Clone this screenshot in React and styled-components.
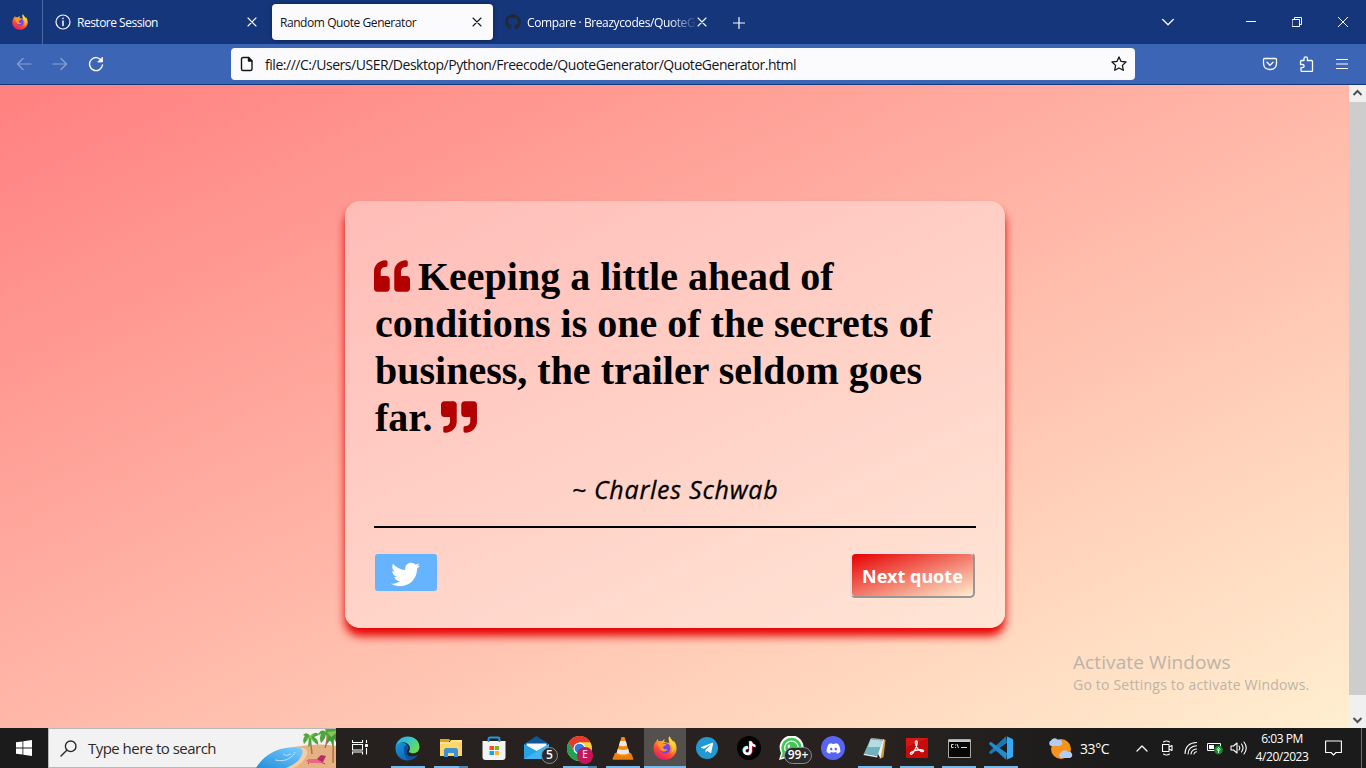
import React from "react";
import styled, { createGlobalStyle } from "styled-components";
import { FaQuoteLeft, FaQuoteRight, FaTwitter, FaGithub, FaDiscord, FaTelegramPlane, FaWhatsapp, FaTiktok } from "react-icons/fa";

const ui = `"Segoe UI", "Open Sans", "Noto Sans", sans-serif`;

const GlobalStyle = createGlobalStyle`
  * { box-sizing: border-box; }
  body { margin: 0; overflow: hidden; font-family: ${ui}; }
  svg { display: block; flex: none; }
`;

const Screen = styled.div`
  width: 1366px;
  height: 768px;
  display: flex;
  flex-direction: column;
  overflow: hidden;
`;

/* ---------- browser chrome ---------- */
const TabStrip = styled.header`
  height: 44px;
  flex: none;
  display: flex;
  align-items: center;
  background: #15367b;
  color: #fbfbfe;
`;

const PinnedTab = styled.div`
  width: 43px;
  height: 44px;
  display: flex;
  align-items: center;
  padding-left: 12px;
  border-right: 1px solid #4d68a0;
`;

const Tab = styled.div`
  width: ${(p) => p.$width}px;
  height: 36px;
  margin-left: ${(p) => p.$gap || 0}px;
  padding: 0 ${(p) => p.$end}px 0 ${(p) => p.$start}px;
  display: flex;
  align-items: center;
  border-radius: 4px;
  background: ${(p) => (p.$active ? "#fbfbfe" : "transparent")};
  color: ${(p) => (p.$active ? "#15141a" : "#fbfbfe")};
  box-shadow: ${(p) => (p.$active ? "0 0 4px rgba(0,0,0,.4)" : "none")};
`;

const TabTitle = styled.span`
  flex: 1;
  min-width: 0;
  margin-left: ${(p) => p.$gap || 0}px;
  padding-top: 2px;
  font-size: 12px;
  line-height: 18px;
  letter-spacing: ${(p) => p.$spacing || 0}px;
  white-space: nowrap;
  mask-image: ${(p) => (p.$fade ? "linear-gradient(to right, #000 84%, transparent)" : "none")};
`;

const NewTab = styled.div`
  margin-left: 21px;
  padding-top: 1px;
`;

const WindowControls = styled.div`
  margin-left: auto;
  padding-right: 18px;
  display: flex;
  align-items: center;
`;

const Spacer = styled.div`
  width: ${(p) => p.$w}px;
  flex: none;
`;

const Toolbar = styled.div`
  height: 41px;
  flex: none;
  display: flex;
  align-items: center;
  background: #3d65b5;
  border-bottom: 1px solid #15367b;
  color: #fbfbfe;
`;

const NavButtons = styled.div`
  width: 231px;
  padding-left: 16px;
  display: flex;
  gap: 20px;
`;

const UrlBar = styled.div`
  width: 904px;
  height: 32px;
  padding: 0 8px;
  display: flex;
  align-items: center;
  background: #fbfbfe;
  color: #15141a;
  border-radius: 4px;
`;

const UrlText = styled.span`
  flex: 1;
  margin-left: 10px;
  padding-top: 2px;
  font-size: 14px;
  line-height: 20px;
  letter-spacing: -0.465px;
  white-space: nowrap;
`;

const ToolbarActions = styled.div`
  margin-left: auto;
  padding-right: 16px;
  display: flex;
  gap: 20px;
`;

/* ---------- page ---------- */
const Viewport = styled.div`
  height: 643px;
  flex: none;
  display: flex;
  position: relative;
`;

const Page = styled.main`
  flex: 1;
  display: flex;
  justify-content: center;
  padding-top: 116px;
  background: linear-gradient(to bottom right, #ff8080, #ffefd0);
`;

const QuoteBox = styled.section`
  width: 660px;
  height: 427px;
  padding: 52px 30px 0;
  margin-left: 1px;
  border-radius: 15px;
  background: rgba(255, 255, 255, 0.35);
  position: relative;
  &::before {
    content: "";
    position: absolute;
    inset: 0;
    border-radius: 15px;
    box-shadow: 0 8px 10px #e60000;
    clip-path: path(evenodd, "M-30 -30H690V470H-30Z M15 0H645A15 15 0 0 1 660 15V412A15 15 0 0 1 645 427H15A15 15 0 0 1 0 412V15A15 15 0 0 1 15 0Z");
  }
`;

const Quote = styled.h1`
  margin: 0;
  font: bold 40px/47px "Times New Roman", "Liberation Serif", serif;
  color: #000;
  svg {
    display: inline-block;
    margin: 0 -2px 0 -1px;
    vertical-align: -4px;
    color: #b30000;
  }
`;

const Author = styled.p`
  margin: 29px 0 0;
  height: 56px;
  text-align: center;
  font: italic 500 25px/38px "Comic Sans MS", "Open Sans", sans-serif;
  letter-spacing: 0.75px;
  color: #000;
  -webkit-text-stroke: 0.3px #000;
`;

const Rule = styled.hr`
  margin: 0 -1px;
  border: 0;
  height: 2px;
  background: #000;
`;

const Actions = styled.div`
  display: flex;
  justify-content: space-between;
  padding-top: 24px;
`;

const TweetButton = styled.button`
  width: 62px;
  height: 37px;
  margin-top: 2px;
  padding: 3px 1px 0 0;
  display: flex;
  align-items: center;
  justify-content: center;
  border: 0;
  border-radius: 3px;
  background: #66b3ff;
  color: #fff;
`;

const NextButton = styled.button`
  width: 125px;
  height: 46px;
  padding: 2px 0 0;
  border: 2px solid;
  border-color: #e3e3e3 #979797 #979797 #e8dcd8;
  border-radius: 5px;
  background: linear-gradient(to bottom right, #e60000, #ffefd0) padding-box;
  color: #fff;
  font: bold 18px/24px "Noto Sans", "Open Sans", sans-serif;
  white-space: nowrap;
`;

const Watermark = styled.div`
  position: absolute;
  left: 1073px;
  top: 564px;
  color: #bcb3a9;
  white-space: nowrap;
`;

const WatermarkTitle = styled.div`
  font-size: 19px;
  line-height: 26px;
  letter-spacing: 0.1px;
`;

const WatermarkText = styled.div`
  font-size: 14px;
  line-height: 20px;
  letter-spacing: 0.2px;
`;

const Scrollbar = styled.div`
  width: 17px;
  display: flex;
  flex-direction: column;
  align-items: center;
  background: #f0f0f0;
`;

const ScrollThumb = styled.div`
  width: 17px;
  height: 593px;
  flex: none;
  margin-bottom: 16px;
  background: #cdcdcd;
`;

/* ---------- taskbar ---------- */
const Taskbar = styled.footer`
  height: 40px;
  flex: none;
  display: flex;
  background: linear-gradient(to right, #1b1b1b, #27221f 30%, #27221f 65%, #1b1b1b 82%);
  color: #fff;
`;

const StartButton = styled.div`
  width: 48px;
  display: flex;
  align-items: center;
  justify-content: center;
`;

const SearchBox = styled.div`
  width: 288px;
  height: 40px;
  padding-left: 11px;
  display: flex;
  align-items: center;
  background: #f2f2f2;
  border: 1px solid #b8b8b8;
  border-right: 0;
  color: #2b2b2b;
  font-size: 15px;
  letter-spacing: -0.53px;
  white-space: nowrap;
`;

const SearchLabel = styled.span`
  width: 168px;
  margin-left: 11px;
`;

const TaskView = styled.div`
  width: 50px;
  padding: 11px 0 0 16px;
`;

const AppSlot = styled.div`
  width: ${(p) => p.$width}px;
  height: 40px;
  display: flex;
  align-items: center;
  justify-content: center;
  position: relative;
  background: ${(p) => (p.$focused ? "#53504e" : "transparent")};
  &::after {
    content: "";
    display: ${(p) => (p.$running ? "block" : "none")};
    position: absolute;
    bottom: 0;
    left: ${(p) => (p.$focused ? 0 : p.$width === 43 ? 5 : 4)}px;
    right: ${(p) => (p.$focused ? 0 : 4)}px;
    height: 2px;
    background: ${(p) => (p.$stacked ? "linear-gradient(to right, #76b9ed 75%, #5486ad 75%)" : "#76b9ed")};
  }
`;

const AppDisc = styled.div`
  width: ${(p) => p.$size}px;
  height: ${(p) => p.$size}px;
  border-radius: 50%;
  display: flex;
  align-items: center;
  justify-content: center;
  background: ${(p) => p.$color};
`;

const Badge = styled.span`
  position: absolute;
  left: ${(p) => p.$x}px;
  top: 19px;
  width: ${(p) => p.$w}px;
  height: 17px;
  border-radius: 9px;
  border: ${(p) => (p.$color ? "0" : "1px solid #8c8c8c")};
  background: ${(p) => p.$color || "#2c2b2b"};
  color: #fff;
  text-align: center;
  font-size: ${(p) => p.$font || 12}px;
  line-height: ${(p) => (p.$color ? 15 : 14)}px;
  font-weight: ${(p) => (p.$color ? 400 : 600)};
  z-index: 1;
`;

const Weather = styled.div`
  width: 108px;
  padding-left: 26px;
  display: flex;
  align-items: center;
  gap: 7px;
  font-size: 14px;
  letter-spacing: -0.4px;
`;

const Tray = styled.div`
  flex: 1;
  display: flex;
  align-items: center;
`;

const TrayIcon = styled.div`
  width: ${(p) => p.$w}px;
  display: flex;
  justify-content: center;
`;

const Clock = styled.div`
  width: 62px;
  text-align: center;
  font-size: 12px;
  line-height: 18px;
  letter-spacing: -0.45px;
  white-space: nowrap;
`;

const ShowDesktop = styled.div`
  width: 5px;
  height: 40px;
  margin-left: auto;
  border-left: 1px solid #6a6a6a;
`;

/* ---------- drawings ---------- */
const Line = ({ d, w = 16, h = 16, sw = 1.2, opacity = 1, children }) => (
  <svg width={w} height={h} viewBox={`0 0 ${w} ${h}`} fill="none" stroke="currentColor" strokeWidth={sw} strokeLinecap="round" strokeLinejoin="round" opacity={opacity}>
    {d && <path d={d} />}
    {children}
  </svg>
);

const Close = () => <Line w={10} h={10} sw={1.1} d="M1 1l8 8M9 1L1 9" />;

const Firefox = ({ size }) => (
  <svg width={size} height={size} viewBox="0 0 24 24">
    <defs>
      <linearGradient id={`ff${size}`} x1=".8" y1="0" x2=".25" y2="1">
        <stop offset="0" stopColor="#fff44f" />
        <stop offset=".35" stopColor="#ffab24" />
        <stop offset=".65" stopColor="#ff4b35" />
        <stop offset="1" stopColor="#e5146f" />
      </linearGradient>
    </defs>
    <path fill={`url(#ff${size})`} d="M3.5 5c.2-.8.8-1.7 1.2-2 .1 1 .6 1.8 1.2 2.2C7 5 8.4 5 9 5.2 10 3.9 11.2 3.5 12 3.5c-.8.9-.9 1.8-.6 2.5l5 1C15.8 4 14.8 2 16.4.2c.7 2.7 3 4 4 6 .2-.6 0-1.4-.2-1.9C22.5 6.3 23.6 9.500 23.600 12.500c0 6.300-5.200 11.300-11.600 11.300S.5 18.900.5 12.700C.5 9.500 1.600 6.800 3.500 5z" />
    <circle cx="12.200" cy="12.300" r="5.200" fill="#7542e5" />
    <path fill="#ff9729" d="M4.500 6.500C7 5.800 9 6.200 10 8h3.500c0 1.500-3.300 1.900-3.300 3-.2 2 1.900 3 4.300 1.900-1.400 3.800-7.200 3.200-8.100-1.400-.5 0-1.600-2.600-1.900-5z" />
    <path fill="#ffd53c" d="M17 7c3.500 3 3.200 7.500 1 10 3.500-1.500 4.500-6 2.400-10.800L16.400.2C15.800 3 16.500 5 17 7z" opacity=".8" />
  </svg>
);

const Edge = () => (
  <svg width="25" height="25" viewBox="0 0 24 24">
    <defs>
      <linearGradient id="edgeTop" x1="0" y1="0" x2="1" y2=".5"><stop stopColor="#22a5e8" /><stop offset=".5" stopColor="#35c4d2" /><stop offset="1" stopColor="#69dc55" /></linearGradient>
      <linearGradient id="edgeLow" x1="0" y1="0" x2="1" y2="1"><stop stopColor="#1798df" /><stop offset="1" stopColor="#0b55a5" /></linearGradient>
    </defs>
    <path fill="url(#edgeLow)" d="M.5 12C.5 7 5 5 8.500 6.500c3 1 4 3.500 4 5.500-2 2-2.500 7 2.500 7.600 3 .4 5-.6 6.500-1.600C19.500 21.500 16 23.500 12 23.500 5.500 23.500.5 18.500.5 12z" />
    <path fill="#0d4f9a" d="M8.500 12.500c0-2 1-3.500 3-4 .7.6 1.700 2 1.300 3.500-2 2-2.500 7 2.500 7.600 3 .4 5-.6 6.500-1.600-1.500 2.700-4.500 4.500-8 4.500-3 0-5.300-4-5.300-10z" />
    <path fill="url(#edgeTop)" d="M.5 11.500C1 5 6 .5 12 .5c7 0 11.500 4.500 11.500 10 0 4.500-3.500 6-6.500 6-2.500 0-4.200-1-3.300-2.200C15.800 10.500 12.500 6 8 6 4 6 1 8.500.5 11.500z" />
  </svg>
);

const Explorer = () => (
  <svg width="22" height="20" viewBox="0 0 22 20">
    <path fill="#e0a21b" d="M0 1h9l2 2h-2v3H0z" /><path fill="#ffd767" d="M0 4h10l1.500-2H22v16H0z" />
    <path fill="#ffe48f" d="M0 4h10l1.500-2H22v2H11l-1 2H0z" /><path fill="#3e92d3" d="M4 11.500L5.500 10h11l1.500 1.500V19h-4v-4H8v4H4z" />
  </svg>
);

const Store = () => (
  <svg width="24" height="24" viewBox="0 0 24 24">
    <path d="M6.500 8V3q0-1.500 1.500-1.500h8q1.500 0 1.500 1.500v5" fill="none" stroke="#2499df" strokeWidth="1.800" />
    <path fill="#f4f4f5" d="M.5 5h23v16q0 3-3 3h-17q-3 0-3-3z" /><path d="M6.500 4.500V6M17.500 4.500V6" stroke="#2499df" strokeWidth="1.800" />
    <path fill="#f15427" d="M7.500 10H12v4H7.500z" /><path fill="#7fba12" d="M12.800 10H17v4h-4.200z" /><path fill="#16a3eb" d="M7.500 15H12v4H7.500z" /><path fill="#fdb913" d="M12.800 15H17v4h-4.200z" />
  </svg>
);

const Mail = () => (
  <svg width="25" height="24" viewBox="0 0 25 24">
    <path fill="#0f5597" d="M0 8L12.500 0 25 8v5H0z" /><path fill="#f6f8fb" d="M2.500 7.500h20V17h-20z" />
    <path fill="#27a2e5" d="M0 8l12.500 7L25 8v15H0z" /><path fill="#57c1f4" d="M0 23l15-9L25 8v15z" opacity=".55" />
  </svg>
);

const Chrome = () => (
  <svg width="25" height="25" viewBox="0 0 24 24">
    <circle cx="12" cy="12" r="12" fill="#fdd13a" />
    <path fill="#e6392f" d="M1.600 6A12 12 0 0 1 22.400 6H12l-5.200 9z" /><path fill="#1fa255" d="M1.600 6A12 12 0 0 0 12 24l5.200-9H6.800z" />
    <circle cx="12" cy="12" r="5.800" fill="#fff" /><circle cx="12" cy="12" r="4.600" fill="#2d79e8" />
  </svg>
);

const Vlc = () => (
  <svg width="22" height="24" viewBox="0 0 22 24">
    <path fill="#ec7d0b" d="M3 17h16l2.500 6q0 .8-1 .8h-19q-1 0-1-.8z" /><path fill="#f58a13" d="M9.500 1h3L18 19q-7 3.500-14 0z" />
    <path fill="#e9e9e8" d="M8.200 5h5.600l1.300 4.500q-4 1.500-8.200 0zM5.800 13q5.200 2 10.400 0l1.200 4q-6.400 3-12.800 0z" />
  </svg>
);

const Notepad = () => (
  <svg width="24" height="24" viewBox="0 0 24 24">
    <path fill="#cf9b42" d="M20 3l2.500 1-2 17-4 2z" /><path fill="#eef3f1" d="M8 2l13 1.500-3.500 19L15 18z" />
    <path fill="#6fb3bd" d="M7.500 3l12 1.500L14.500 20 1 17.500z" /><path fill="#b5dcdf" d="M7.500 3l12 1.500-2 6.500L5 11z" />
    <path d="M7.500 2.500L20 4" stroke="#59666c" strokeDasharray="1 1" strokeWidth="1.500" /><path fill="#dce9e9" d="M1 17.500L14.500 20l-.5 1.500L.5 19z" />
  </svg>
);

const Acrobat = () => (
  <svg width="22" height="20" viewBox="0 0 22 20">
    <path fill="#c70b0b" d="M0 0h22v20H0z" /><path fill="#e52323" d="M0 0h22L0 9z" opacity=".5" />
    <path fill="none" stroke="#fff" strokeWidth="1.300" d="M4.500 16c-1-1.500 4-3.500 7-4s6.500-.3 6 1-4.500 0-6.500-3.500S9 3 10.300 3s1.200 3-.5 7-4.300 7.500-5.300 6z" />
  </svg>
);

const Terminal = () => (
  <svg width="23" height="19" viewBox="0 0 23 19">
    <path fill="#070707" stroke="#a8a8a8" d="M.5.500h22v18H.5z" /><path fill="#c5c9cc" d="M1 1h21v2H1z" />
    <path stroke="#ddd" fill="none" d="M5.500 5.500h-2v3h2M7.500 5.500v1M7.500 8v1M9 5l1.500 4M13 8.500h6" />
  </svg>
);

const VsCode = () => (
  <svg width="24" height="24" viewBox="0 0 24 24">
    <path fill="#1679ba" d="M.5 15.500L17 .3l1 6.500-15.500 11q-.7.400-1.300-.1l-.9-.8q-.6-.7.200-1.400z" />
    <path fill="#218bd0" d="M.5 8.500L17 23.700l1-6.500-15.500-11q-.7-.4-1.300.1l-.9.800q-.6.700.2 1.400z" />
    <path fill="#35a9f2" d="M17 0l6.200 2.800q.8.400.8 1.300v15.800q0 .9-.8 1.300L17 24q1 0 1-1V1q0-1-1-1z" />
  </svg>
);

const Beach = () => (
  <svg width="81" height="39" viewBox="0 0 81 39">
    <defs><linearGradient id="sea" x1="0" y1="1" x2="1" y2="0"><stop stopColor="#248fdb" /><stop offset="1" stopColor="#79ccff" /></linearGradient></defs>
    <path fill="#e6b183" d="M2 39Q18 20 46 17 66 14 81 17v22z" /><path fill="#f4cda2" d="M32 20q26-5 19 8-5 8-13 11H10z" />
    <path fill="url(#sea)" d="M1 39Q12 21 34 18.500q17-2 13 7Q44 34 31 39z" />
    <path d="M20 31q9 2 15-2 4-3 5-6M28 25q3 3 8 0" stroke="#b4e0ff" strokeWidth="1" fill="none" />
    <path d="M57 25q-1-8-2-17M78 34q1-15-1-30M70 19q3-8 2-16" stroke="#aa7343" strokeWidth="1.500" fill="none" />
    <path fill="#4da53b" d="M55 7q-3-5-7-1l2 1q-3 3-1 8l5-6-1 9q4-2 3-8 4 4 7 6 1-5-4-8 4-1 5-3-5-3-9 2zM71 3q-5-4-8 3l3-1q-2 4 0 9 4-3 5-9 2 7 6 8 1-4-1-7l5 3V0H70z" />
    <path fill="#459934" d="M76 6q-5 2-4 9l4-5q0 5 2 7l1-7 2 3V3z" />
    <path fill="#87c557" d="M55 7l6-4-5 5 4 5-5-4-6 2zM72 3l4 5 5-4v-2z" />
    <path fill="#f0668a" d="M51 32l3-2h10l4 2-1 2H54z" /><path fill="#b92a68" d="M62 30l4-4 5 1-3 6-3-1z" /><path d="M54 34l-1 1M66 33l4 2" stroke="#ba365b" />
  </svg>
);

const apps = [
  { icon: <Edge />, width: 43, running: true },
  { icon: <Explorer />, width: 43, running: true, stacked: true },
  { icon: <Store />, width: 43 },
  { icon: <Mail />, width: 43, badge: <Badge $x={26} $w={17}>5</Badge> },
  { icon: <Chrome />, width: 43, running: true, stacked: true, badge: <Badge $x={19} $w={16} $color="#c2185b" $font={10}>E</Badge> },
  { icon: <Vlc />, width: 43, running: true },
  { icon: <Firefox size={24} />, width: 41, running: true, focused: true },
  { icon: <AppDisc $size={22} $color="#2299d4"><FaTelegramPlane size={14} /></AppDisc>, width: 42 },
  {
    icon: (
      <AppDisc $size={24} $color="#000">
        <svg width="16" height="16" viewBox="0 0 16 16">
          <FaTiktok x="0.5" y="0.7" size={14} color="#25f4ee" /><FaTiktok x="1.8" y="1.700" size={14} color="#fe2c55" /><FaTiktok x="1.1" y="1.200" size={14} color="#fff" />
        </svg>
      </AppDisc>
    ),
    width: 42,
  },
  {
    icon: (
      <svg width="25" height="24" viewBox="0 0 25 24">
        <path fill="#fff" d="M0 24l2-7A12 12 0 1 1 7 22z" /><circle cx="12.500" cy="12" r="10.200" fill="#42c655" /><path fill="#42c655" d="M2 22l2-6 4 4z" />
        <FaWhatsapp x="4" y="3.500" size={17} color="#fff" />
      </svg>
    ),
    width: 42,
    badge: <Badge $x={14} $w={28}>99+</Badge>,
  },
  { icon: <AppDisc $size={24} $color="#5865f2"><FaDiscord size={15} /></AppDisc>, width: 42 },
  { icon: <Notepad />, width: 42, running: true },
  { icon: <Acrobat />, width: 42, running: true },
  { icon: <Terminal />, width: 42, running: true },
  { icon: <VsCode />, width: 42, running: true },
];

export default function App() {
  return (
    <Screen>
      <GlobalStyle />
      <TabStrip>
        <PinnedTab><Firefox size={16} /></PinnedTab>
        <Tab $width={225} $start={12} $end={11}>
          <Line sw={1.2}><circle cx="8" cy="8" r="7" /><path d="M8 7v4.500M8 4.300v.3" strokeWidth="1.500" /></Line>
          <TabTitle $gap={6} $spacing={-0.5}>Restore Session</TabTitle>
          <Close />
        </Tab>
        <Tab $width={221} $gap={4} $start={8} $end={11} $active>
          <TabTitle $spacing={-0.44}>Random Quote Generator</TabTitle>
          <Close />
        </Tab>
        <Tab $width={219} $start={12} $end={5}>
          <FaGithub size={16} color="#24292f" />
          <TabTitle $gap={6} $spacing={-0.4} $fade>Compare · Breazycodes/QuoteG</TabTitle>
          <Close />
        </Tab>
        <NewTab><Line w={12} h={12} d="M6 .5v11M.5 6h11" /></NewTab>
        <WindowControls>
          <Line w={12} h={8} sw={1.3} d="M.7 1.500L6 6.700l5.300-5.200" />
          <Spacer $w={72} />
          <Line w={10} h={2} sw={1} d="M0 .5h10" />
          <Spacer $w={36} />
          <Line w={10} h={10} sw={1} d="M.5 2.500h7v7h-7zM2.500 2.500v-2h7v7h-2" />
          <Spacer $w={36} />
          <Line w={10} h={10} sw={1} d="M0 0l10 10M10 0L0 10" />
        </WindowControls>
      </TabStrip>

      <Toolbar>
        <NavButtons>
          <Line opacity={0.4} d="M15 8H1.500M7 2.500L1.500 8 7 13.500" />
          <Line opacity={0.4} d="M1 8h13.500M9 2.500L14.500 8 9 13.500" />
          <Line sw={1.400}><path d="M13.500 4.500A6.500 6.500 0 1 0 14.500 9" /><path fill="currentColor" strokeWidth=".8" d="M14.500 1.500v4.500H10z" /></Line>
        </NavButtons>
        <UrlBar>
          <Line sw={1.400}><path d="M4 1.500h5.500l3.500 3.500v8q0 1.500-1.500 1.500H4q-1.500 0-1.500-1.500V3q0-1.500 1.500-1.500z" /><path d="M9.500 1.500V5H13z" fill="currentColor" /></Line>
          <UrlText>file:///C:/Users/USER/Desktop/Python/Freecode/QuoteGenerator/QuoteGenerator.html</UrlText>
          <Line sw={1.300} d="M8 .900l2.100 4.500 4.900.6-3.600 3.400.9 4.900L8 12l-4.300 2.300.9-4.900L1 6l4.900-.6z" />
        </UrlBar>
        <ToolbarActions>
          <Line sw={1.300} d="M2.500 2.500h11q1 0 1 1V7q0 6.500-6.500 6.500T1.500 7V3.500q0-1 1-1zM5 6.300l3 2.900 3-2.900" />
          <Line sw={1.300} d="M6 4.500V2.500a1.700 1.700 0 0 1 3.400 0v2h4.100q1 0 1 1v9q0 1-1 1h-9.500q-1 0-1-1v-2.800h1.500a1.600 1.600 0 0 0 0-3.200H2.500V8.500V5.500q0-1 1-1z" />
          <Line d="M2.500 3.500h11M2.500 8h11M2.500 12.500h11" />
        </ToolbarActions>
      </Toolbar>

      <Viewport>
        <Page>
          <QuoteBox>
            <Quote>
              <FaQuoteLeft size={36} />{" "}Keeping a little ahead of conditions is one of the secrets of business, the trailer seldom goes far.{" "}<FaQuoteRight size={36} />
            </Quote>
            <Author>~ Charles Schwab</Author>
            <Rule />
            <Actions>
              <TweetButton><FaTwitter size={29} /></TweetButton>
              <NextButton>Next quote</NextButton>
            </Actions>
          </QuoteBox>
        </Page>
        <Scrollbar>
          <svg width="17" height="17" viewBox="0 0 17 17"><path d="M4.500 10l4-4 4 4" fill="none" stroke="#505050" strokeWidth="2" /></svg>
          <ScrollThumb />
          <svg width="17" height="17" viewBox="0 0 17 17"><path d="M4.500 7l4 4 4-4" fill="none" stroke="#505050" strokeWidth="2" /></svg>
        </Scrollbar>
        <Watermark>
          <WatermarkTitle>Activate Windows</WatermarkTitle>
          <WatermarkText>Go to Settings to activate Windows.</WatermarkText>
        </Watermark>
      </Viewport>

      <Taskbar>
        <StartButton>
          <svg width="16" height="16" viewBox="0 0 16 16" fill="#fff"><path d="M0 2.300l6.500-.9v6.200H0zM7.300 1.300L16 0v7.600H7.300zM0 8.400h6.500v6.200L0 13.700zM7.300 8.400H16V16l-8.700-1.300z" /></svg>
        </StartButton>
        <SearchBox>
          <Line w={17} h={17} sw={1.400}><circle cx="10.700" cy="6.300" r="5.300" /><path d="M6.800 10.200L1 16" /></Line>
          <SearchLabel>Type here to search</SearchLabel>
          <Beach />
        </SearchBox>
        <TaskView>
          <svg width="17" height="17" viewBox="0 0 17 17" fill="none" stroke="#fff"><path d="M.5 1v2.500h10V1M.5 15.500V13h10v2.500M.5 5.500h10v5.500H.500zM14.500 1v3M14.500 9v6.500" strokeWidth="1.100" /><path fill="#fff" d="M13.500 5.500h2v2h-2z" /></svg>
        </TaskView>
        {apps.map((a, i) => (
          <AppSlot key={i} $width={i === 6 ? 42 : a.width} $running={a.running} $stacked={a.stacked} $focused={a.focused}>
            {a.icon}
            {a.badge}
          </AppSlot>
        ))}
        <Weather>
          <svg width="25" height="23" viewBox="0 0 25 23">
            <circle cx="13" cy="12" r="10" fill="#f4941d" />
            <path fill="#b4cdf2" d="M3 9a3 3 0 0 1 0-5.500A4 4 0 0 1 10 3a3 3 0 0 1 2 6z" /><path fill="#b4cdf2" d="M13 21a3 3 0 0 1 0-5.500 4 4 0 0 1 7-.5 3 3 0 0 1 2 6z" />
          </svg>
          33°C
        </Weather>
        <Tray>
          <TrayIcon $w={24}><Line w={12} h={7} sw={1.300} d="M1 6l5-5 5 5" /></TrayIcon>
          <TrayIcon $w={25}><Line w={14} h={16} sw={1.100} d="M2.500 4.500h6.500v7H2.500zM9 7l3-1.500v5L9 9M3.500 2Q6.500 0 9.500 2M3.500 14q3 2 6 0" /></TrayIcon>
          <TrayIcon $w={24}>
            <Line w={14} h={14} sw={1.100} d="M1 12.500Q1.500 2 12.500 1.500M4 13Q4.500 5.500 12.500 4.800M7 13Q7.500 8.500 12.500 8M10 13q.3-2 2.500-2.200" />
          </TrayIcon>
          <TrayIcon $w={23}>
            <svg width="16" height="14" viewBox="0 0 16 14"><path d="M.5 2.500h13v7H.5z" fill="none" stroke="#fff" /><path fill="#fff" d="M2 4h5v4H2z" /><circle cx="11.500" cy="9" r="4.400" fill="#128a28" /><path d="M11.500 12V8M9.800 8.500l1.700-2 1.700 2-1.700 1.500z" stroke="#fff" fill="none" strokeWidth=".8" /></svg>
          </TrayIcon>
          <TrayIcon $w={25}><Line w={17} h={14} sw={1.100} d="M1 5h2.500L7 2v10L3.500 9H1zM9 5q1.500 2 0 4M11.500 3q3 4 0 8M14 1q4.500 6 0 12" /></TrayIcon>
          <Clock>6:03 PM<br />4/20/2023</Clock>
          <TrayIcon $w={41}><Line w={17} h={16} sw={1.100} d="M.6 1h15.800v11.500H11l-2.500 2.500L6 12.500H.6z" /></TrayIcon>
          <ShowDesktop />
        </Tray>
      </Taskbar>
    </Screen>
  );
}
